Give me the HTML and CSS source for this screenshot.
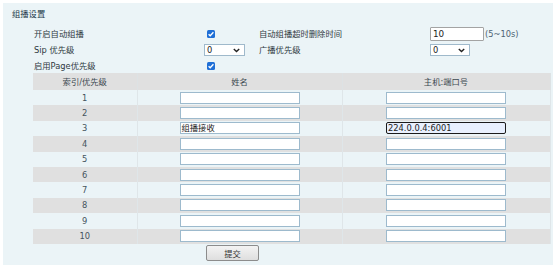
FILE: index.html
```html
<!DOCTYPE html>
<html lang="zh-CN">
<head>
<meta charset="utf-8">
<title>组播设置</title>
<link rel="stylesheet" href="styles.css">
</head>
<body>
<div class="panel">
  <div class="title">组播设置</div>
  <div class="settings">
    <div class="label">开启自动组播</div>
    <div class="ctl"><span class="check"><svg width="8" height="8" viewBox="0 0 8 8"><path d="M1.6 4.2 L3.2 5.8 L6.4 2.2" fill="none" stroke="#fff" stroke-width="1.3"/></svg></span></div>
    <div class="label">自动组播超时删除时间</div>
    <div class="ctl"><span class="textbox">10</span><span class="hint">(5~10s)</span></div>

    <div class="label">Sip 优先级</div>
    <div class="ctl"><span class="select s1"><span>0</span><svg width="7" height="5" viewBox="0 0 7 5"><path d="M0.8 1 L3.5 3.6 L6.2 1" fill="none" stroke="#222" stroke-width="1.4"/></svg></span></div>
    <div class="label">广播优先级</div>
    <div class="ctl"><span class="select s2"><span>0</span><svg width="7" height="5" viewBox="0 0 7 5"><path d="M0.8 1 L3.5 3.6 L6.2 1" fill="none" stroke="#222" stroke-width="1.4"/></svg></span></div>

    <div class="label">启用Page优先级</div>
    <div class="ctl"><span class="check"><svg width="8" height="8" viewBox="0 0 8 8"><path d="M1.6 4.2 L3.2 5.8 L6.4 2.2" fill="none" stroke="#fff" stroke-width="1.3"/></svg></span></div>
    <div></div>
    <div></div>
  </div>
  <table class="grid">
    <colgroup><col class="c1"><col class="c2"><col class="c3"></colgroup>
    <thead>
      <tr><th>索引/优先级</th><th>姓名</th><th>主机:端口号</th></tr>
    </thead>
    <tbody>
      <tr><td>1</td><td><span class="field"></span></td><td><span class="field"></span></td></tr>
      <tr><td>2</td><td><span class="field"></span></td><td><span class="field"></span></td></tr>
      <tr><td>3</td><td><span class="field">组播接收</span></td><td><span class="field focus">224.0.0.4:6001</span></td></tr>
      <tr><td>4</td><td><span class="field"></span></td><td><span class="field"></span></td></tr>
      <tr><td>5</td><td><span class="field"></span></td><td><span class="field"></span></td></tr>
      <tr><td>6</td><td><span class="field"></span></td><td><span class="field"></span></td></tr>
      <tr><td>7</td><td><span class="field"></span></td><td><span class="field"></span></td></tr>
      <tr><td>8</td><td><span class="field"></span></td><td><span class="field"></span></td></tr>
      <tr><td>9</td><td><span class="field"></span></td><td><span class="field"></span></td></tr>
      <tr><td>10</td><td><span class="field"></span></td><td><span class="field"></span></td></tr>
    </tbody>
  </table>
  <div class="actions"><span class="button">提交</span></div>
</div>
</body>
</html>
```
FILE: styles.css
```css
html, body {
  margin: 0;
  padding: 0;
  background: #ffffff;
}
body {
  font-family: "DejaVu Sans", "Noto Sans CJK SC", sans-serif;
  font-size: 8.3px;
  color: #333;
}
.panel {
  margin: 3px 0 0 3px;
  width: 550px;
  height: 262px;
  box-sizing: border-box;
  padding-top: 6px;
  background: #ebf4f7;
}
.title {
  margin-left: 9px;
  line-height: 10px;
  color: #22394a;
}
.settings {
  margin-top: 7px;
  padding-left: 31px;
  display: grid;
  grid-template-columns: 170px 55px 171px auto;
  grid-template-rows: 16px 16px 15px;
  align-items: center;
}
.label {
  line-height: 10px;
  color: #2f3a42;
  white-space: nowrap;
}
.ctl {
  display: flex;
  align-items: center;
}
.check {
  margin-left: 3px;
  width: 8px;
  height: 8px;
  border-radius: 1.5px;
  background: #1f6fd6;
  display: flex;
}
.textbox {
  box-sizing: border-box;
  width: 54px;
  height: 14px;
  border: 1px solid #a3a3a3;
  border-radius: 1px;
  background: #fff;
  padding-left: 2px;
  font-size: 8.8px;
  line-height: 12px;
  color: #222;
}
.hint {
  margin-left: 1px;
  color: #4d6373;
}
.select {
  box-sizing: border-box;
  height: 12px;
  border: 1px solid #9fb9cb;
  background: #fff;
  display: flex;
  align-items: center;
  justify-content: space-between;
  padding: 0 4px 0 2px;
  line-height: 10px;
  color: #222;
}
.s1 { width: 41px; }
.s2 { width: 40px; }
.grid {
  margin-left: 30px;
  width: 517px;
  table-layout: fixed;
  border-collapse: collapse;
}
.c1 { width: 104px; }
.c2 { width: 205px; }
.c3 { width: 208px; }
.grid th {
  height: 17px;
  padding: 0;
  background: #e0e0e0;
  font-weight: normal;
  color: #3c4950;
  line-height: 10px;
  text-align: center;
  border-right: 1px solid #dde2e4;
}
.grid td {
  height: 15.4px;
  padding: 0;
  text-align: center;
  line-height: 10px;
  color: #45545e;
  border-right: 1px solid #dfe6e9;
  vertical-align: middle;
}
.grid tbody tr:nth-child(odd) td { background: #ebf4f7; }
.grid tbody tr:nth-child(even) td { background: #e0e0e0; }
.field {
  display: block;
  margin: 0 auto;
  box-sizing: border-box;
  width: 120px;
  height: 12px;
  border: 1px solid #9dbacd;
  background: #fff;
  text-align: left;
  padding-left: 1px;
  line-height: 10px;
  color: #222;
}
.field.focus {
  border-color: #1b1b1b;
  border-radius: 2px;
  background: #e8f0fe;
}
.actions {
  margin-top: 1px;
  padding-left: 203px;
  display: flex;
}
.button {
  box-sizing: border-box;
  width: 53px;
  height: 16px;
  border: 1px solid #8c8c8c;
  border-radius: 2px;
  background: linear-gradient(#f3f3f3, #dedede);
  display: flex;
  align-items: center;
  justify-content: center;
  color: #333;
}
```
